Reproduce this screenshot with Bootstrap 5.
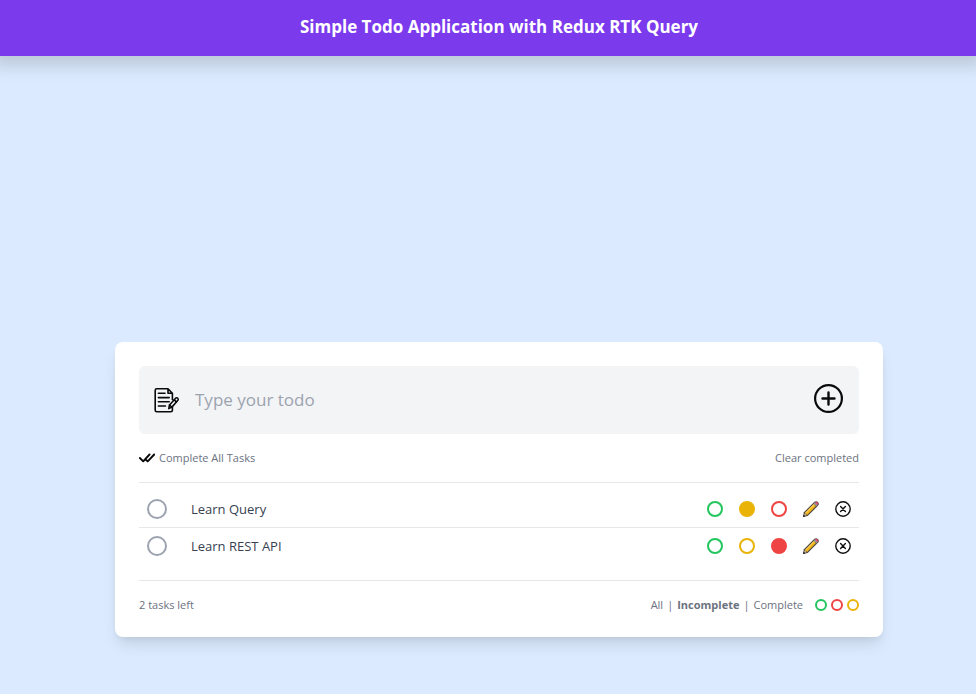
<!DOCTYPE html>
<html lang="en">
<head>
<meta charset="utf-8">
<meta name="viewport" content="width=device-width, initial-scale=1">
<title>Simple Todo Application with Redux RTK Query</title>
<link href="https://cdn.jsdelivr.net/npm/bootstrap@5.3.0/dist/css/bootstrap.min.css" rel="stylesheet">
<style>
  body { background: #dbeafe; font-family: "Segoe UI", "Open Sans", "Noto Sans", sans-serif; color: #374151; min-height: 100vh; }
  .site-bar { background: #7c3aed; height: 56px; padding-left: 22px; padding-bottom: 2px; box-shadow: 0 2px 16px 8px rgba(0,0,0,.14); }
  .site-title { font-size: 17px; line-height: 28px; }
  .todo-page { padding: 286px 0 32px 22px; }
  .todo-panel { max-width: 768px; border-radius: 8px; box-shadow: 0 10px 15px -3px rgba(0,0,0,.1), 0 4px 6px -2px rgba(0,0,0,.06); }
  .todo-form { background: #f3f4f6; border-radius: 6px; }
  .todo-input { font-size: 17px; line-height: 28px; color: #6b7280; outline: 0; }
  .todo-input::placeholder { color: #9ca3af; opacity: 1; }
  .meta { font-size: 11px; line-height: 16px; color: #6b7280; }
  .plain { background: none; border: 0; padding: 0; color: inherit; }
  .rule { border-color: #e5e7eb !important; }
  .todo-item { font-size: 13px; line-height: 20px; }
  .todo-item + .todo-item { border-top: 1px solid #e5e7eb; }
  .ring { appearance: none; flex: none; margin: 0; width: 16px; height: 16px; border: 2px solid var(--ring); border-radius: 50%; background: transparent; cursor: pointer; }
  .ring:checked { background: var(--ring); }
  .ring-lg { width: 20px; height: 20px; }
  .ring-sm { width: 12px; height: 12px; }
  .ring-gray { --ring: #9ca3af; }
  .ring-green { --ring: #22c55e; }
  .ring-yellow { --ring: #eab308; }
  .ring-red { --ring: #ef4444; }
</style>
</head>
<body>
<svg class="d-none" xmlns="http://www.w3.org/2000/svg">
  <symbol id="pencil" viewBox="0 0 16 16">
    <path d="M0 16 .9 11.3 11.4.8Q13.2-.6 15 1 16.6 2.8 15.2 4.6L4.7 15.1Z" fill="#51483f"/>
    <path d="M2 11.9 10.9 3 13 5.1 4.1 14Z" fill="#f2b51c"/>
    <path d="M2 11.9 10.9 3 11.5 3.6 2.6 12.5Z" fill="#ffdc69"/>
    <path d="M10.7 2.5 12 1.3 14.7 4 13.5 5.3Z" fill="#8f9aa8"/>
    <path d="M12 1.5Q13.3.4 14.5 1.5 15.6 2.7 14.5 4Z" fill="#fb4676"/>
    <path d="M1.7 12.4 3.6 14.3 1.2 14.8Z" fill="#f2d6a5"/>
    <path d="M0 16 .6 13.6 2.4 15.4Z" fill="#222"/>
  </symbol>
  <symbol id="cancel" viewBox="0 0 16 16">
    <g fill="none" stroke="#111" stroke-width="1.4" stroke-linecap="round"><circle cx="8" cy="8" r="7.2"/><path d="m5.6 5.6 4.8 4.8m0-4.8-4.8 4.8"/></g>
  </symbol>
</svg>

<header class="site-bar d-flex align-items-center justify-content-center text-white">
  <h1 class="site-title fw-bold m-0">Simple Todo Application with Redux RTK Query</h1>
</header>

<main class="todo-page">
  <div class="todo-panel bg-white mx-auto p-4">
    <form class="todo-form d-flex align-items-center p-3">
      <svg width="24" height="26" viewBox="0 0 24 26" class="flex-shrink-0 overflow-visible" aria-hidden="true">
        <g fill="none" stroke="#0a0a0a" stroke-width="1.6" stroke-linejoin="round" stroke-linecap="round">
          <path d="M17.4 20V23.2Q17.4 24.8 15.8 24.8H1.8Q.2 24.8.2 23.2V3.4Q.2 1.8 1.8 1.8H13L17.4 6.2V12.6M13 1.8V6.2H17.4"/>
          <path d="M3.4 6.3H10M3.4 10.6H14.2M3.4 14.8H14.2M3.4 19H10.5"/>
          <path fill="#f3f4f6" d="M13.8 21.6 14.5 18 20.6 11.2Q21.6 10.3 22.7 11.2 23.7 12.2 22.9 13.3L16.9 20.1Z"/>
          <path d="M14.5 18 16.9 20.1M19.2 12.9 21.4 14.9"/>
        </g>
      </svg>
      <input type="text" class="todo-input flex-grow-1 border-0 bg-transparent py-1 px-3" placeholder="Type your todo" aria-label="Type your todo">
      <button type="submit" class="plain d-flex" aria-label="Add todo">
        <svg width="30" height="34" viewBox="0 0 30 34"><g fill="none" stroke="#0a0a0a" stroke-width="2.2"><circle cx="15.5" cy="15.5" r="13.4"/><path d="M15.5 9.5v12M9.5 15.5h12" stroke-width="2.4" stroke-linecap="round"/></g></svg>
      </button>
    </form>

    <div class="meta d-flex justify-content-between my-3">
      <button type="button" class="plain d-flex align-items-center gap-1">
        <svg width="16" height="16" viewBox="0 0 16 16" fill="none" stroke="#0a0a0a" stroke-width="1.9" stroke-linecap="round" stroke-linejoin="round"><path d="m.9 8 3.3 3.3 6.3-6.8M7.2 10l1.5 1.4 6.5-6.9"/></svg>
        Complete All Tasks
      </button>
      <button type="button" class="plain">Clear completed</button>
    </div>

    <ul class="rule list-unstyled m-0 pt-2 pb-3 border-top border-bottom">
      <li class="todo-item d-flex align-items-center p-2">
        <input id="todo1" type="checkbox" class="ring ring-lg ring-gray">
        <label for="todo1" class="flex-grow-1 ps-4">Learn Query</label>
        <div class="d-flex align-items-center gap-3">
          <input type="radio" name="color1" class="ring ring-green" aria-label="Green">
          <input type="radio" name="color1" class="ring ring-yellow" aria-label="Yellow" checked>
          <input type="radio" name="color1" class="ring ring-red" aria-label="Red">
          <button type="button" class="plain d-flex" aria-label="Edit"><svg width="16" height="16"><use href="#pencil"/></svg></button>
          <button type="button" class="plain d-flex" aria-label="Delete"><svg width="16" height="16"><use href="#cancel"/></svg></button>
        </div>
      </li>
      <li class="todo-item d-flex align-items-center p-2">
        <input id="todo2" type="checkbox" class="ring ring-lg ring-gray">
        <label for="todo2" class="flex-grow-1 ps-4">Learn REST API</label>
        <div class="d-flex align-items-center gap-3">
          <input type="radio" name="color2" class="ring ring-green" aria-label="Green">
          <input type="radio" name="color2" class="ring ring-yellow" aria-label="Yellow">
          <input type="radio" name="color2" class="ring ring-red" aria-label="Red" checked>
          <button type="button" class="plain d-flex" aria-label="Edit"><svg width="16" height="16"><use href="#pencil"/></svg></button>
          <button type="button" class="plain d-flex" aria-label="Delete"><svg width="16" height="16"><use href="#cancel"/></svg></button>
        </div>
      </li>
    </ul>

    <div class="meta d-flex justify-content-between align-items-center pt-3">
      <span>2 tasks left</span>
      <div class="d-flex align-items-center gap-1">
        <div class="d-flex gap-1 me-2">
          <button type="button" class="plain">All</button><span>|</span>
          <button type="button" class="plain fw-bold">Incomplete</button><span>|</span>
          <button type="button" class="plain">Complete</button>
        </div>
        <input type="checkbox" class="ring ring-sm ring-green" aria-label="Filter green">
        <input type="checkbox" class="ring ring-sm ring-red" aria-label="Filter red">
        <input type="checkbox" class="ring ring-sm ring-yellow" aria-label="Filter yellow">
      </div>
    </div>
  </div>
</main>
<script src="https://cdn.jsdelivr.net/npm/bootstrap@5.3.0/dist/js/bootstrap.bundle.min.js"></script>
</body>
</html>
